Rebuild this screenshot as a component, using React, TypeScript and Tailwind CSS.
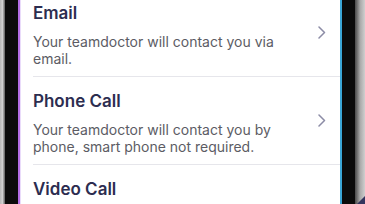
const options = [
  {
    title: 'Email',
    text: 'Your teamdoctor will contact you via email.',
  },
  {
    title: 'Phone Call',
    text: 'Your teamdoctor will contact you by phone, smart phone not required.',
  },
  {
    title: 'Video Call',
  },
]

function Chevron() {
  return (
    <svg width="8" height="13" viewBox="0 0 8 13" className="ml-auto shrink-0" fill="none">
      <polyline points="1,1 6.5,6.5 1,12" stroke="#8c8ca6" strokeWidth="1.5" strokeLinecap="round" strokeLinejoin="round" />
    </svg>
  )
}

function OptionRow({ title, text }: { title: string; text?: string }) {
  return (
    <div className="pl-[12px]">
      <div className="flex min-h-[88px] items-center border-b border-[#e6e6eb] pr-[14px]">
        <div className="w-[262px] self-start pt-[13px] pb-[9px]">
          <div className="text-[17px] leading-[22px] font-semibold text-[#2c2d50]">{title}</div>
          {text ? (
            <p className="mt-[9px] text-[14px] leading-[17px] text-[#5c5c64]">{text}</p>
          ) : (
            <div className="h-[60px]" />
          )}
        </div>
        <Chevron />
      </div>
    </div>
  )
}

export default function App() {
  return (
    <div
      className="relative flex h-[204px] w-[365px] overflow-hidden bg-black"
      style={{ fontFamily: 'Inter, "Liberation Sans", sans-serif' }}
    >
      <div className="w-[5px] shrink-0 bg-gradient-to-r from-[#b8b8b8] via-[#d0d0d0] to-[#5a5a5a]" />
      <div className="w-[13px] shrink-0 bg-[#0b0b0b]" />
      <div className="w-[2px] shrink-0 bg-[#b46ee6]" />
      <div className="w-[1px] shrink-0 bg-[#eadcfa]" />
      <div className="w-[319px] shrink-0 overflow-hidden bg-white">
        <div className="-mt-[11px]">
          {options.map((o) => (
            <OptionRow key={o.title} title={o.title} text={o.text} />
          ))}
        </div>
      </div>
      <div className="w-[2px] shrink-0 bg-[#3aa6d6]" />
      <div className="w-[13px] shrink-0 bg-[#0b0b0b]" />
      <div className="w-[10px] shrink-0 bg-gradient-to-r from-[#4a4a4a] via-[#a8a8a8] to-[#cfcfcf]" />
      <svg className="absolute right-0 bottom-0" width="8" height="10" viewBox="0 0 8 10">
        <polygon points="0,10 8,2 8,10" fill="#34355e" />
      </svg>
    </div>
  )
}
